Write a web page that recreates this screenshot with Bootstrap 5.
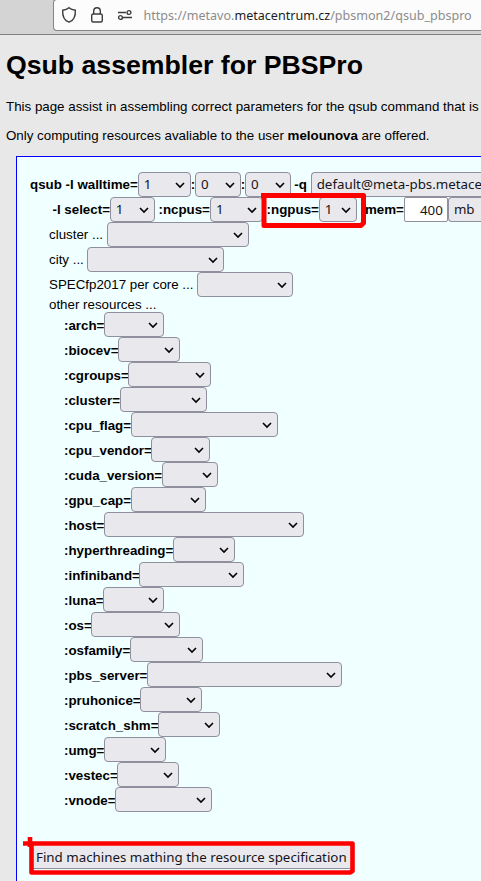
<!DOCTYPE html>
<html lang="en">
<head>
<meta charset="utf-8">
<meta name="viewport" content="width=device-width, initial-scale=1">
<title>Qsub assembler for PBSPro</title>
<link href="https://cdn.jsdelivr.net/npm/bootstrap@5.3.0/dist/css/bootstrap.min.css" rel="stylesheet">
<style>
body{background:#e8e8e8;color:#000;font:13.333px/16px "Liberation Sans",Arial,sans-serif;height:881px}
.toolbar{height:36px;background:#d4d4d4;border-bottom:1px solid #808080;padding-left:53px}
.urlbar{height:32px;margin-top:-1px;background:#fcfcfc;border:1px solid #858585;border-right:0;border-radius:4px 0 0 4px;font:12.56px/18px "Noto Sans",sans-serif;color:#8c8c8c}
.urlbar svg{fill:none;stroke:#3c3c3c;stroke-width:1.4;flex:none}
.shield{margin-left:7px}
.lock,.tune{margin-left:13px}
.urlbar .addr{margin-left:10.5px;padding-top:2px}
.urlbar .host-name{color:#1c1c1c}
.intro{padding:15px 0 0 6px}
.intro h1{font-size:26.667px;line-height:30px;font-weight:700;margin-bottom:19px}
.intro p{margin-bottom:13px}
.intro p:last-child{margin-bottom:12px}
.qsub{height:726px;margin-left:16px;background:#f0ffff;border:1px solid #00f;border-width:1px 0 0 1px;padding:15px 0 0 13px}
.line{height:25px}
.line b{line-height:25px;flex:none}
.line span{flex:none}
.indent-a{padding-left:19px}
.indent-b{padding-left:34px;margin-top:-1px}
.indent-b b{line-height:27px}
.indent-b b{margin-right:-.4px}
.select-label{margin-left:22.5px;margin-right:-.2px}
.colon{margin-right:-.2px}
.form-select,.mem-input{flex:none;height:25px;font:13.333px/19px "Noto Sans",sans-serif;color:#15141a;border:1px solid #8f8f9d;border-radius:4px}
.form-select{padding:2px 20px 2px 5px;background-color:#e9e9ed;background-image:url("data:image/svg+xml,%3Csvg xmlns='http://www.w3.org/2000/svg' viewBox='0 0 10 7'%3E%3Cpath d='M1 1l4 4 4-4' fill='none' stroke='%23000' stroke-width='1.6'/%3E%3C/svg%3E");background-size:10px 7px;background-position:right 5px top 9px}
.mem-input{width:44px;padding:2px 4px;text-align:right;background:#fff;border-radius:2px}
#hours{width:53px}#minutes,#seconds{width:45.7px}#queue{flex:1;min-width:0;border-right:0;border-radius:4px 0 0 4px;background-image:none;padding-right:0;text-overflow:clip}
#select{width:45px}#ncpus{width:53px}#ngpus{width:38px}#unit{flex:1;min-width:0;border-right:0;border-radius:4px 0 0 4px;background-image:none;padding-right:0}
#cl{width:142px}#city{width:137px;margin-left:-.4px}#spec{width:96px}
#arch{width:60px}#biocev{width:62px}#cgroups{width:83px}#cluster{width:87px}#cpu_flag{width:147px}
#cpu_vendor{width:59px}#cuda_version{width:56px}#gpu_cap{width:75px}#host{width:200px}#hyperthreading{width:62px}
#infiniband{width:105px;margin-left:-.4px}#luna{width:61px}#os{width:89px}#osfamily{width:73px}#pbs_server{width:195px}
#pruhonice{width:62px}#scratch_shm{width:62px}#umg{width:62px}#vestec{width:62px}#vnode{width:97px}
.find{height:25px;margin:32px 0 0;padding:0 5px;font:13.333px/22px "Noto Sans",sans-serif;background:#e9e9ed;border:1px solid #8f8f9d;border-radius:4px;color:#15141a}
.marks{left:0;top:0;pointer-events:none;fill:none;stroke:#f00;stroke-width:5;stroke-linejoin:round}
</style>
<script src="https://cdn.jsdelivr.net/npm/bootstrap@5.3.0/dist/js/bootstrap.bundle.min.js"></script>
</head>
<body class="position-relative overflow-hidden">
<header class="toolbar">
  <div class="urlbar d-flex align-items-center text-nowrap">
    <svg class="shield" width="16" height="18" viewBox="0 0 16 18"><path d="M8 1.800C6.300 3.300 4 4 1.700 4.200C1.300 10 3.500 14.500 8 16.200C12.500 14.500 14.700 10 14.300 4.200C12 4 9.700 3.300 8 1.800Z"/></svg>
    <svg class="lock" width="14" height="18" viewBox="0 0 14 18"><rect x="1.700" y="8" width="10.600" height="8" rx="1.500"/><path d="M3.700 8V5a3.300 3.300 0 0 1 6.600 0v3"/></svg>
    <svg class="tune" width="16" height="12" viewBox="0 0 16 12"><path d="M1 3.500h8M6 8.500h9"/><circle cx="12" cy="3.500" r="1.900"/><circle cx="3.500" cy="8.500" r="1.900"/></svg>
    <span class="addr">https://metavo.<span class="host-name">metacentrum.cz</span>/pbsmon2/qsub_pbspro</span>
  </div>
</header>
<main>
  <div class="intro text-nowrap">
    <h1>Qsub assembler for PBSPro</h1>
    <p>This page assist in assembling correct parameters for the qsub command that is</p>
    <p>Only computing resources avaliable to the user <b>melounova</b> are offered.</p>
  </div>
  <form class="qsub text-nowrap">
    <div class="line d-flex"><b>qsub -l walltime=</b><select class="form-select" id="hours"><option>1</option></select><b class="colon">:</b><select class="form-select" id="minutes"><option>0</option></select><b class="colon">:</b><select class="form-select" id="seconds"><option>0</option></select><b>&nbsp;-q&nbsp;</b><select class="form-select" id="queue"><option>default@meta-pbs.metace</option></select></div>
    <div class="line d-flex"><b class="select-label">-l select=</b><select class="form-select" id="select"><option>1</option></select><b>&nbsp;:ncpus=</b><select class="form-select" id="ncpus"><option>1</option></select><b>&nbsp;:ngpus=</b><select class="form-select" id="ngpus"><option>1</option></select><b>&nbsp;:mem=</b><input class="mem-input" value="400" aria-label="mem"><select class="form-select" id="unit"><option>mb</option></select></div>
    <div class="line indent-a d-flex align-items-center"><span>cluster ...&nbsp;</span><select class="form-select" id="cl"></select></div>
    <div class="line indent-a d-flex align-items-center"><span>city ...&nbsp;</span><select class="form-select" id="city"></select></div>
    <div class="line indent-a d-flex align-items-center"><span>SPECfp2017 per core ...&nbsp;</span><select class="form-select" id="spec"></select></div>
    <div class="indent-a">other resources ...</div>
    <div class="indent-b">
      <div class="line d-flex"><b>:arch=</b><select class="form-select" id="arch"></select></div>
      <div class="line d-flex"><b>:biocev=</b><select class="form-select" id="biocev"></select></div>
      <div class="line d-flex"><b>:cgroups=</b><select class="form-select" id="cgroups"></select></div>
      <div class="line d-flex"><b>:cluster=</b><select class="form-select" id="cluster"></select></div>
      <div class="line d-flex"><b>:cpu_flag=</b><select class="form-select" id="cpu_flag"></select></div>
      <div class="line d-flex"><b>:cpu_vendor=</b><select class="form-select" id="cpu_vendor"></select></div>
      <div class="line d-flex"><b>:cuda_version=</b><select class="form-select" id="cuda_version"></select></div>
      <div class="line d-flex"><b>:gpu_cap=</b><select class="form-select" id="gpu_cap"></select></div>
      <div class="line d-flex"><b>:host=</b><select class="form-select" id="host"></select></div>
      <div class="line d-flex"><b>:hyperthreading=</b><select class="form-select" id="hyperthreading"></select></div>
      <div class="line d-flex"><b>:infiniband=</b><select class="form-select" id="infiniband"></select></div>
      <div class="line d-flex"><b>:luna=</b><select class="form-select" id="luna"></select></div>
      <div class="line d-flex"><b>:os=</b><select class="form-select" id="os"></select></div>
      <div class="line d-flex"><b>:osfamily=</b><select class="form-select" id="osfamily"></select></div>
      <div class="line d-flex"><b>:pbs_server=</b><select class="form-select" id="pbs_server"></select></div>
      <div class="line d-flex"><b>:pruhonice=</b><select class="form-select" id="pruhonice"></select></div>
      <div class="line d-flex"><b>:scratch_shm=</b><select class="form-select" id="scratch_shm"></select></div>
      <div class="line d-flex"><b>:umg=</b><select class="form-select" id="umg"></select></div>
      <div class="line d-flex"><b>:vestec=</b><select class="form-select" id="vestec"></select></div>
      <div class="line d-flex"><b>:vnode=</b><select class="form-select" id="vnode"></select></div>
    </div>
    <button type="button" class="find">Find machines mathing the resource specification</button>
  </form>
</main>
<svg class="marks position-absolute" width="481" height="881" viewBox="0 0 481 881"><path d="M261 195.500H363.500V223L361 225.500H264V195.500"/><path d="M23 843.500H352.500V871L350 872.500H31.500V843.500M30 837v10" stroke-width="4.600"/></svg>
</body>
</html>
